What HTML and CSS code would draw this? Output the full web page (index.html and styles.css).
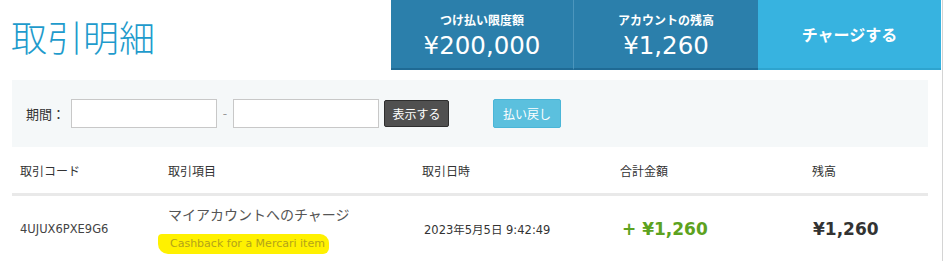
FILE: index.html
```html
<!DOCTYPE html>
<html lang="ja">
<head>
<meta charset="utf-8">
<title>取引明細</title>
<link rel="stylesheet" href="styles.css">
</head>
<body>
<div class="page">
  <header class="top">
    <div class="title-area"><h1 class="title">取引明細</h1></div>
    <div class="stat stat-limit">
      <div class="stat-label">つけ払い限度額</div>
      <div class="stat-value">¥200,000</div>
    </div>
    <div class="stat stat-balance">
      <div class="stat-label">アカウントの残高</div>
      <div class="stat-value">¥1,260</div>
    </div>
    <a class="charge" href="#">チャージする</a>
  </header>

  <section class="filter">
    <label class="filter-label">期間：</label>
    <input class="date-input" type="text">
    <span class="dash">-</span>
    <input class="date-input" type="text">
    <button class="btn-show" type="button">表示する</button>
    <button class="btn-refund" type="button">払い戻し</button>
  </section>

  <div class="table">
    <div class="row head">
      <div class="cell">取引コード</div>
      <div class="cell">取引項目</div>
      <div class="cell">取引日時</div>
      <div class="cell">合計金額</div>
      <div class="cell">残高</div>
    </div>
    <div class="row body-row">
      <div class="cell code">4UJUX6PXE9G6</div>
      <div class="cell item">
        <div class="item-name">マイアカウントへのチャージ</div>
        <div class="item-note"><span class="marker">Cashback for a Mercari item</span></div>
      </div>
      <div class="cell date">2023年5月5日 9:42:49</div>
      <div class="cell amount">+ ¥1,260</div>
      <div class="cell balance">¥1,260</div>
    </div>
  </div>
</div>
</body>
</html>
```

FILE: styles.css
```css
* { box-sizing: border-box; }
html, body { margin: 0; padding: 0; background: #fff; }
body {
  font-family: "DejaVu Sans", "Noto Sans CJK JP", sans-serif;
  color: #333;
}
.page {
  width: 943px;
  min-height: 261px;
  border-right: 1px solid #d4d4d4;
  padding-right: 1px;
}
.top {
  display: flex;
  height: 70px;
}
.title-area {
  width: 391px;
  display: flex;
  align-items: center;
  padding-left: 11px;
}
.title {
  margin: 0;
  font-family: "Noto Sans CJK JP", sans-serif;
  font-weight: 300;
  font-size: 36px;
  line-height: 1;
  color: #1e9bcc;
  padding-top: 2px;
}
.stat {
  background: #2b7fab;
  color: #fff;
  border-bottom: 2px solid #1f6a94;
  display: flex;
  flex-direction: column;
  align-items: center;
  padding-top: 12px;
}
.stat-limit { width: 183px; border-right: 1px solid #4c96bd; }
.stat-balance { width: 184px; }
.stat-label {
  font-family: "Noto Sans CJK JP", sans-serif;
  font-weight: 700;
  font-size: 12px;
  line-height: 16px;
}
.stat-value {
  font-size: 24.5px;
  line-height: 30px;
  margin-top: 3px;
}
.charge {
  width: 183px;
  background: #37b3e0;
  border-bottom: 2px solid #2ea4cf;
  color: #fff;
  text-decoration: none;
  font-family: "Noto Sans CJK JP", sans-serif;
  font-weight: 700;
  font-size: 16px;
  display: flex;
  align-items: center;
  justify-content: center;
}
.filter {
  margin: 10px 0 0 12px;
  width: 916px;
  height: 67px;
  background: #f5f8f9;
  display: flex;
  align-items: center;
  padding-left: 14px;
}
.filter-label {
  font-family: "Noto Sans CJK JP", sans-serif;
  font-size: 13px;
  color: #333;
  margin-right: 6px;
}
.date-input {
  width: 146px;
  height: 29px;
  border: 1px solid #c8c8c8;
  background: #fff;
  margin: 0;
  padding: 0 4px;
}
.dash {
  width: 16px;
  text-align: center;
  font-size: 12px;
  color: #999;
}
.btn-show {
  margin-left: 5px;
  width: 65px;
  height: 27px;
  background: #505050;
  border: 1px solid #2e2e2e;
  border-radius: 2px;
  color: #fff;
  font-family: "Noto Sans CJK JP", sans-serif;
  font-size: 12px;
  padding: 0;
}
.btn-refund {
  margin-left: 44px;
  width: 68px;
  height: 29px;
  background: #5bc0de;
  border: 1px solid #4ab6d8;
  border-radius: 2px;
  color: #fff;
  font-family: "Noto Sans CJK JP", sans-serif;
  font-size: 12px;
  padding: 0;
}
.table {
  margin-left: 12px;
  width: 916px;
}
.row {
  display: grid;
  grid-template-columns: 148px 254px 198px 192px 124px;
  align-items: center;
}
.row .cell { padding-left: 8px; }
.head {
  height: 49px;
  border-bottom: 3px solid #e9e9e9;
  font-family: "Noto Sans CJK JP", sans-serif;
  font-size: 12px;
  color: #333;
}
.body-row {
  height: 66px;
}
.code { font-size: 11.5px; color: #444; }
.item-name {
  font-family: "Noto Sans CJK JP", sans-serif;
  font-size: 14px;
  line-height: 20px;
  color: #555;
}
.item-note {
  margin-top: 8px;
  margin-left: -10px;
}
.marker {
  display: inline-block;
  font-size: 11px;
  line-height: 20px;
  color: #b3a31a;
  background: #fff100;
  padding: 0 4px 0 12px;
  border-radius: 4px 9px 6px 10px;
}
.date { font-size: 11.5px; color: #333; padding-left: 10px !important; }
.amount {
  font-size: 17px;
  font-weight: 700;
  color: #5ca220;
  padding-left: 10px !important;
}
.balance {
  font-size: 17px;
  font-weight: 700;
  color: #333;
  padding-left: 9px !important;
}
```
